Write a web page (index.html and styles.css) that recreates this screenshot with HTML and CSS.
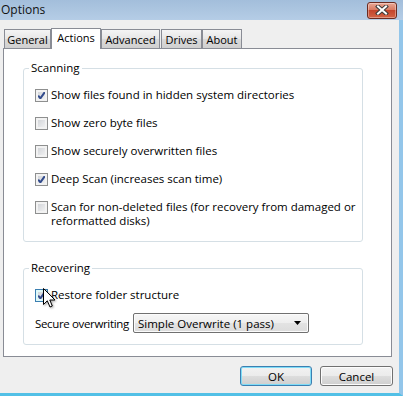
FILE: index.html
```html
<!DOCTYPE html>
<html>
  <head>
    <title>Options</title>
    <link rel="stylesheet" href="styles.css">
  </head>
  <body>
    <div class="window">
      <div class="titlebar">
        <span class="title">Options</span>
        <button class="close" title="Close">
          <svg width="14" height="10" viewBox="0 0 14 10">
            <path d="M3 1.5 L11 8.5 M11 1.5 L3 8.5" stroke="#3a3a3a" stroke-width="4" stroke-linecap="square" />
            <path d="M3 1.5 L11 8.5 M11 1.5 L3 8.5" stroke="#fff" stroke-width="2" stroke-linecap="square" />
          </svg>
        </button>
      </div>

      <div class="client">
        <div class="tabs">
          <div class="tab tab-general">General</div>
          <div class="tab tab-actions active">Actions</div>
          <div class="tab tab-advanced">Advanced</div>
          <div class="tab tab-drives">Drives</div>
          <div class="tab tab-about">About</div>
        </div>

        <div class="panel">
          <fieldset class="group">
            <legend>Scanning</legend>
            <div class="rows">
              <label class="check"><span class="box checked"></span><span>Show files found in hidden system directories</span></label>
              <label class="check"><span class="box"></span><span>Show zero byte files</span></label>
              <label class="check"><span class="box"></span><span>Show securely overwritten files</span></label>
              <label class="check"><span class="box checked"></span><span>Deep Scan (increases scan time)</span></label>
              <label class="check"><span class="box"></span><span class="nowrap">Scan for non-deleted files (for recovery from damaged or<br>reformatted disks)</span></label>
            </div>
          </fieldset>

          <fieldset class="group recovering">
            <legend>Recovering</legend>
            <div class="rows tight">
              <label class="check pointer">
                <span class="box checked hover"></span><span>Restore folder structure</span>
                <svg class="cursor" width="13" height="21" viewBox="0 0 13 21">
                  <path d="M0.5 0.5 V16.5 L4.3 12.8 L7 19 L9.3 18 L6.8 12 H12 Z" fill="#fff" stroke="#000" stroke-width="1" stroke-linejoin="round" />
                </svg>
              </label>
              <div class="field">
                <span class="field-label">Secure overwriting</span>
                <div class="select">
                  <span>Simple Overwrite (1 pass)</span>
                  <svg width="7" height="4" viewBox="0 0 7 4"><path d="M0 0 H7 L3.5 4 Z" fill="#000" /></svg>
                </div>
              </div>
            </div>
          </fieldset>
        </div>

        <div class="buttons">
          <button class="btn default ok">OK</button>
          <button class="btn cancel">Cancel</button>
        </div>
      </div>
    </div>
  </body>
</html>
```

FILE: styles.css
```css
* {
  box-sizing: border-box;
}

body {
  margin: 0;
  font-family: "Open Sans", "Noto Sans", sans-serif;
  font-size: 11.5px;
  color: #000;
}

.window {
  width: 403px;
  height: 396px;
  display: flex;
  flex-direction: column;
  background-color: #efefef;
}

.titlebar {
  height: 20px;
  flex: none;
  display: flex;
  align-items: center;
  justify-content: space-between;
  padding: 0 6px 0 1px;
  background: linear-gradient(#a3bedb, #b5cde6);
}

.title {
  font-size: 12px;
  line-height: 14px;
  color: #111;
}

.close {
  width: 30px;
  height: 17px;
  padding: 0;
  display: flex;
  align-items: center;
  justify-content: center;
  border: 1px solid #6b2b20;
  border-radius: 3px;
  background: linear-gradient(#e9a896, #d97a62 45%, #c4452c 50%, #d36446);
  box-shadow: inset 0 0 0 1px rgba(255, 255, 255, 0.35);
}

.client {
  flex: 1;
  min-height: 0;
  display: flex;
  flex-direction: column;
  padding: 8px 7px 0 3px;
  border-right: 4px solid #93c6ea;
  border-bottom: 3px solid #52c0e6;
  background-color: #efefef;
}

/* tab strip */
.tabs {
  height: 20px;
  flex: none;
  display: flex;
  align-items: flex-end;
  padding-left: 1px;
  position: relative;
  z-index: 1;
}

.tab {
  height: 19px;
  padding-top: 1px;
  font-size: 11px;
  line-height: 18px;
  text-align: center;
  white-space: nowrap;
  border: 1px solid #898c95;
  border-bottom: none;
  background: linear-gradient(#f4f4f4, #e6e6e6 50%, #dadada 50%, #d0d0d0);
  color: #000;
}

.tab.active {
  height: 21px;
  margin-bottom: -1px;
  padding-top: 0;
  background: #fff;
  position: relative;
  z-index: 2;
}

.tab-general { width: 47px; }
.tab-actions { width: 50px; }
.tab-advanced { width: 59px; }
.tab-drives { width: 41px; margin-left: 1px; }
.tab-about { width: 40px; }

.panel {
  flex: none;
  background: #fff;
  border: 1px solid #898c95;
  padding: 12px 28px 11px 19px;
}

/* group boxes */
.group {
  margin: 0;
  min-width: 0;
  padding: 13px 0 13px 0;
  border: 1px solid #d5dfe5;
  border-radius: 3px;
}

.group legend {
  margin-left: 5px;
  padding: 0 2px;
  line-height: 14px;
}

.group.recovering {
  margin-top: 19px;
  padding-bottom: 11px;
}

.rows {
  display: flex;
  flex-direction: column;
  gap: 14px;
  padding-left: 11px;
}

.rows.tight {
  gap: 11px;
}

.check {
  display: flex;
  align-items: flex-start;
  gap: 3px;
  line-height: 14px;
}

.check.pointer {
  position: relative;
}

.nowrap {
  white-space: nowrap;
}

.box {
  width: 13px;
  height: 13px;
  flex: none;
  margin-top: 1px;
  border: 1px solid #8e8f8f;
  background: linear-gradient(135deg, #cbced3, #f7f7f7);
  box-shadow: inset 0 0 0 2px #f2f2f2;
}

.box.checked {
  background:
    url("data:image/svg+xml,%3Csvg xmlns='http://www.w3.org/2000/svg' width='11' height='11' viewBox='0 0 11 11'%3E%3Cpath d='M2.2 5.6 L4.4 8.4 L8.8 2.2' fill='none' stroke='%23324b8c' stroke-width='2'/%3E%3C/svg%3E") center / 11px 11px no-repeat,
    linear-gradient(135deg, #cbced3, #f7f7f7);
}

.box.hover {
  border-color: #3c7fb1;
  box-shadow: inset 0 0 0 2px #def9fa;
}

.cursor {
  position: absolute;
  left: 8px;
  top: 0;
  filter: drop-shadow(1px 1px 1px rgba(0, 0, 0, 0.35));
}

.field {
  display: flex;
  align-items: center;
}

.field-label {
  width: 98px;
  flex: none;
  white-space: nowrap;
  letter-spacing: -0.35px;
}

.select {
  width: 176px;
  height: 20px;
  display: flex;
  align-items: center;
  justify-content: space-between;
  padding: 0 7px 0 4px;
  border: 1px solid #707070;
  border-radius: 2px;
  background: linear-gradient(#f6f6f6, #eeeeee 50%, #e3e3e3 50%, #dcdcdc);
  box-shadow: inset 0 0 0 1px #fbfbfb;
}

/* dialog buttons */
.buttons {
  display: flex;
  justify-content: flex-end;
  gap: 8px;
  margin-top: 9px;
  margin-right: -1px;
}

.btn {
  height: 20px;
  padding: 0;
  font: inherit;
  color: #000;
  border: 1px solid #707070;
  border-radius: 3px;
  background: linear-gradient(#f2f2f2, #ebebeb 50%, #dddddd 50%, #cfcfcf);
  box-shadow: inset 0 0 0 1px #fcfcfc;
}

.btn.ok {
  width: 72px;
}

.btn.cancel {
  width: 73px;
}

.btn.default {
  border-color: #3c7fb1;
  box-shadow: inset 0 0 0 1px #7fdcf7;
}
```
